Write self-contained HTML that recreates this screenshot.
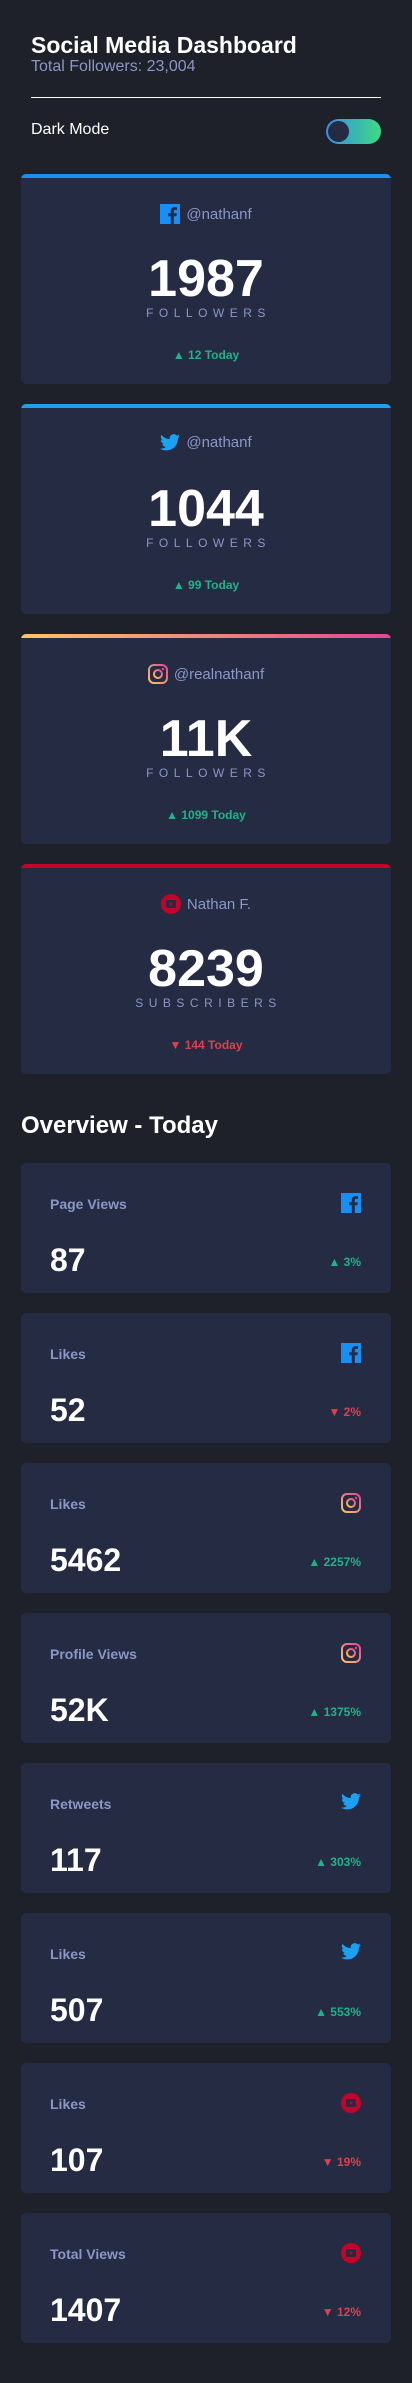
<!DOCTYPE html>
<html><head><meta charset="utf-8"><style>
*{margin:0;padding:0;box-sizing:border-box}
body{width:412px;height:2383px;background:#1e202a;font-family:"Liberation Sans",sans-serif;color:#fff;position:relative;overflow:hidden}
h1{position:absolute;left:31px;top:32px;font-size:23px;font-weight:bold}
.sub{position:absolute;left:31px;top:58px;font-size:16px;color:#8b97c6}
.line{position:absolute;left:31px;top:97px;width:350px;height:1px;background:#fff}
.dm{position:absolute;left:31px;top:121px;font-size:16px;color:#fff}
.tog{position:absolute;left:326px;top:119px;width:55px;height:25px;border-radius:13px;background:linear-gradient(90deg,#378fe6,#3eda82)}
.tog:after{content:"";position:absolute;left:2px;top:2px;width:21px;height:21px;border-radius:50%;background:#252b43}
.card{position:absolute;left:21px;width:370px;height:210px;background:#252b43;border-radius:5px;overflow:hidden;text-align:center}
.card .bar{height:4px}
.handle{position:absolute;top:30px;left:0;right:0;font-size:15px;color:#8b97c6;display:flex;justify-content:center;align-items:center;gap:6px}
.num{position:absolute;top:75px;left:0;right:0;font-size:52px;font-weight:bold}
.lbl{position:absolute;top:132px;left:5px;right:0;font-size:12px;letter-spacing:5.5px;color:#8b97c6}
.today{position:absolute;top:174px;left:0;right:0;font-size:12px;font-weight:bold}
.g{color:#1db489}.r{color:#dc414c}
.ov{position:absolute;left:21px;top:1112px;font-size:24px;font-weight:bold}
.oc{position:absolute;left:21px;width:370px;height:130px;background:#252b43;border-radius:5px}
.oc .t{position:absolute;left:29px;top:33px;font-size:14px;font-weight:bold;color:#8b97c6}
.oc .ic{position:absolute;left:320px;top:30px}
.oc .n{position:absolute;left:29px;top:79px;font-size:32px;font-weight:bold}
.oc .p{position:absolute;right:30px;top:92px;font-size:12px;font-weight:bold}
svg{display:block}
</style></head><body>
<h1>Social Media Dashboard</h1>
<div class="sub">Total Followers: 23,004</div>
<div class="line"></div>
<div class="dm">Dark Mode</div>
<div class="tog"></div>

<svg width="0" height="0" style="position:absolute"><defs>
<linearGradient id="ig" x1="0" y1="1" x2="1" y2="0"><stop offset="0" stop-color="#fdc468"/><stop offset="1" stop-color="#df4996"/></linearGradient>
</defs></svg>

<div class="card" style="top:174px"><div class="bar" style="background:#198ff5"></div>
<div class="handle"><svg width="20" height="20" viewBox="0 0 20 20"><rect width="20" height="20" fill="#178ff5"/><path d="M13.8 20v-7.7h2.6l.4-3h-3V7.4c0-.9.3-1.5 1.5-1.5H17V3.2c-.3 0-1.2-.1-2.3-.1-2.3 0-3.900 1.4-3.9 4v2.2H8.2v3h2.6V20z" fill="#252b43"/></svg>@nathanf</div>
<div class="num">1987</div><div class="lbl">FOLLOWERS</div>
<div class="today g">▲ 12 Today</div></div>

<div class="card" style="top:404px"><div class="bar" style="background:#1ca0f2"></div>
<div class="handle"><svg width="20" height="17" viewBox="0 0 24 20"><path d="M24 2.4a10 10 0 01-2.8.8A5 5 0 0023.3.4a10 10 0 01-3.1 1.2A4.9 4.9 0 0011.8 6 14 14 0 011.7.9a4.9 4.9 0 001.5 6.6 4.9 4.9 0 01-2.2-.6 4.9 4.9 0 003.9 4.9 5 5 0 01-2.2.1 4.9 4.9 0 004.6 3.4A9.9 9.9 0 010 17.3 14 14 0 007.5 19.5c9.1 0 14.3-7.7 14-14.6A10 10 0 0024 2.4z" fill="#1ca0f2"/></svg>@nathanf</div>
<div class="num">1044</div><div class="lbl">FOLLOWERS</div>
<div class="today g">▲ 99 Today</div></div>

<div class="card" style="top:634px"><div class="bar" style="background:linear-gradient(90deg,#fdc468,#df4996)"></div>
<div class="handle"><svg width="20" height="20" viewBox="0 0 20 20"><rect x="1" y="1" width="18" height="18" rx="5" fill="none" stroke="url(#ig)" stroke-width="2"/><circle cx="10" cy="10" r="4" fill="none" stroke="url(#ig)" stroke-width="2"/><circle cx="15" cy="5" r="1.2" fill="#df4996"/></svg>@realnathanf</div>
<div class="num">11K</div><div class="lbl">FOLLOWERS</div>
<div class="today g">▲ 1099 Today</div></div>

<div class="card" style="top:864px"><div class="bar" style="background:#c4032a"></div>
<div class="handle"><svg width="20" height="20" viewBox="0 0 20 20"><circle cx="10" cy="10" r="10" fill="#c4032a"/><rect x="5" y="6" width="10" height="8" rx="1.5" fill="#252b43"/><path d="M9 8.2v3.6l3-1.8z" fill="#c4032a"/></svg>Nathan F.</div>
<div class="num">8239</div><div class="lbl">SUBSCRIBERS</div>
<div class="today r">▼ 144 Today</div></div>

<div class="ov">Overview - Today</div>

<div class="oc" style="top:1163px"><div class="t">Page Views</div><div class="ic"><svg width="20" height="20" viewBox="0 0 20 20"><rect width="20" height="20" fill="#178ff5"/><path d="M13.8 20v-7.7h2.6l.4-3h-3V7.4c0-.9.3-1.5 1.5-1.5H17V3.2c-.3 0-1.2-.1-2.3-.1-2.3 0-3.9 1.4-3.9 4v2.2H8.2v3h2.6V20z" fill="#252b43"/></svg></div><div class="n">87</div><div class="p g">▲ 3%</div></div>
<div class="oc" style="top:1313px"><div class="t">Likes</div><div class="ic"><svg width="20" height="20" viewBox="0 0 20 20"><rect width="20" height="20" fill="#178ff5"/><path d="M13.8 20v-7.7h2.6l.4-3h-3V7.4c0-.9.3-1.5 1.5-1.5H17V3.2c-.3 0-1.2-.1-2.3-.1-2.3 0-3.9 1.4-3.9 4v2.2H8.2v3h2.6V20z" fill="#252b43"/></svg></div><div class="n">52</div><div class="p r">▼ 2%</div></div>
<div class="oc" style="top:1463px"><div class="t">Likes</div><div class="ic"><svg width="20" height="20" viewBox="0 0 20 20"><rect x="1" y="1" width="18" height="18" rx="5" fill="none" stroke="url(#ig)" stroke-width="2"/><circle cx="10" cy="10" r="4" fill="none" stroke="url(#ig)" stroke-width="2"/><circle cx="15" cy="5" r="1.2" fill="#df4996"/></svg></div><div class="n">5462</div><div class="p g">▲ 2257%</div></div>
<div class="oc" style="top:1613px"><div class="t">Profile Views</div><div class="ic"><svg width="20" height="20" viewBox="0 0 20 20"><rect x="1" y="1" width="18" height="18" rx="5" fill="none" stroke="url(#ig)" stroke-width="2"/><circle cx="10" cy="10" r="4" fill="none" stroke="url(#ig)" stroke-width="2"/><circle cx="15" cy="5" r="1.2" fill="#df4996"/></svg></div><div class="n">52K</div><div class="p g">▲ 1375%</div></div>
<div class="oc" style="top:1763px"><div class="t">Retweets</div><div class="ic"><svg width="20" height="17" viewBox="0 0 24 20"><path d="M24 2.4a10 10 0 01-2.8.8A5 5 0 0023.3.4a10 10 0 01-3.1 1.2A4.9 4.9 0 0011.8 6 14 14 0 011.7.9a4.9 4.9 0 001.5 6.6 4.9 4.9 0 01-2.2-.6 4.9 4.9 0 003.9 4.9 5 5 0 01-2.2.1 4.9 4.9 0 004.6 3.4A9.9 9.9 0 010 17.3 14 14 0 007.5 19.5c9.1 0 14.3-7.7 14-14.6A10 10 0 0024 2.4z" fill="#1ca0f2"/></svg></div><div class="n">117</div><div class="p g">▲ 303%</div></div>
<div class="oc" style="top:1913px"><div class="t">Likes</div><div class="ic"><svg width="20" height="17" viewBox="0 0 24 20"><path d="M24 2.4a10 10 0 01-2.8.8A5 5 0 0023.3.4a10 10 0 01-3.1 1.2A4.9 4.9 0 0011.8 6 14 14 0 011.7.9a4.9 4.9 0 001.5 6.6 4.9 4.9 0 01-2.2-.6 4.9 4.9 0 003.9 4.9 5 5 0 01-2.2.1 4.9 4.9 0 004.6 3.4A9.9 9.9 0 010 17.3 14 14 0 007.5 19.5c9.1 0 14.3-7.7 14-14.6A10 10 0 0024 2.4z" fill="#1ca0f2"/></svg></div><div class="n">507</div><div class="p g">▲ 553%</div></div>
<div class="oc" style="top:2063px"><div class="t">Likes</div><div class="ic"><svg width="20" height="20" viewBox="0 0 20 20"><circle cx="10" cy="10" r="10" fill="#c4032a"/><rect x="5" y="6" width="10" height="8" rx="1.5" fill="#252b43"/><path d="M9 8.2v3.6l3-1.8z" fill="#c4032a"/></svg></div><div class="n">107</div><div class="p r">▼ 19%</div></div>
<div class="oc" style="top:2213px"><div class="t">Total Views</div><div class="ic"><svg width="20" height="20" viewBox="0 0 20 20"><circle cx="10" cy="10" r="10" fill="#c4032a"/><rect x="5" y="6" width="10" height="8" rx="1.5" fill="#252b43"/><path d="M9 8.2v3.6l3-1.8z" fill="#c4032a"/></svg></div><div class="n">1407</div><div class="p r">▼ 12%</div></div>
</body></html>
